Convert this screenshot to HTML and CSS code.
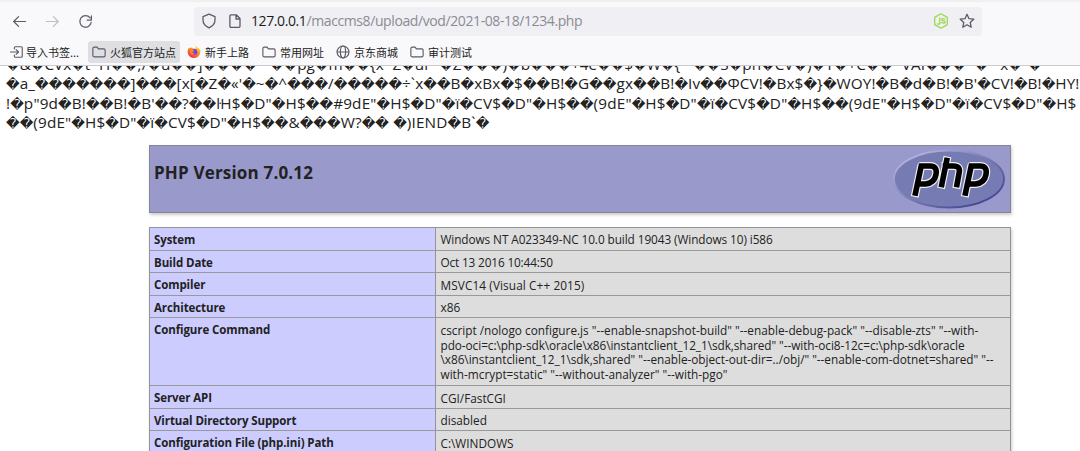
FILE: index.html
```html
<!DOCTYPE html>
<html lang="zh-CN">
<head>
<meta charset="utf-8">
<title>phpinfo()</title>
<link rel="stylesheet" href="styles.css">
</head>
<body>
<header class="chrome">
  <div class="nav">
    <svg class="nav-icon back" viewBox="0 0 16 16"><path d="M14.5 8H2M7 2.8 1.8 8 7 13.2"/></svg>
    <svg class="nav-icon forward" viewBox="0 0 16 16"><path d="M1.5 8H14M9 2.8 14.2 8 9 13.2"/></svg>
    <svg class="nav-icon reload" viewBox="0 0 16 16"><path d="M12.9 4.2A6.1 6.1 0 1 0 14.1 8.8M14.3 2v4.5H9.8"/></svg>
    <div class="urlbar">
      <svg class="url-icon shield" viewBox="0 0 16 16"><path d="M8 1.2 14 3.6V7c0 3.7-2.8 6.4-6 7.9C4.800 13.400 2 10.700 2 7V3.600z"/></svg>
      <svg class="url-icon page" viewBox="0 0 16 16"><path d="M4 1.800h5.300L13 5.500v7.700a1.100 1.100 0 0 1-1.100 1.100H4a1.100 1.100 0 0 1-1.100-1.100V2.900A1.100 1.100 0 0 1 4 1.800zM9 2v4h4"/></svg>
      <div class="url"><span class="host">127.0.0.1</span>/maccms8/upload/vod/2021-08-18/1234.php</div>
      <svg class="url-icon node" viewBox="0 0 16 16"><path d="M8 .8l6.300 3.600v7.200L8 15.200 1.700 11.600V4.400zM6.800 5v5.300q0 1.300-2.200.7M11.900 6q-3.200-1-3.200.7 0 .9 1.700 1.100 1.700.2 1.700 1.200 0 1.700-3.500.7"/></svg>
      <svg class="url-icon star" viewBox="0 0 16 16"><path d="M8 1.300l2 4.400 4.800.5-3.600 3.200 1 4.800L8 11.800l-4.200 2.400 1-4.800L1.200 6.200 6 5.700z"/></svg>
    </div>
  </div>
  <nav class="bookmarks">
    <a class="mark m-import"><svg viewBox="0 0 16 16"><path d="M5 4.500V3.200A1.200 1.200 0 0 1 6.200 2h6.600A1.200 1.200 0 0 1 14 3.200v9.600a1.200 1.200 0 0 1-1.200 1.200H6.200A1.200 1.200 0 0 1 5 12.800v-1.300M.500 8h9M7 5.200 9.800 8 7 10.800"/></svg><span>导入书签...</span></a>
    <a class="mark m-fox on"><svg viewBox="0 0 16 16"><path d="M1 4a1.500 1.500 0 0 1 1.500-1.500h3.300l1.500 2h6.200A1.500 1.500 0 0 1 15 6v6a1.500 1.500 0 0 1-1.500 1.500h-11A1.500 1.500 0 0 1 1 12z"/></svg><span>火狐官方站点</span></a>
    <a class="mark m-start"><svg class="firefox" viewBox="0 0 16 16"><defs><linearGradient id="flame" x1=".9" y1="0" x2=".2" y2="1"><stop offset="0" stop-color="#fff44f"/><stop offset=".4" stop-color="#ff9a1f"/><stop offset="1" stop-color="#f5204e"/></linearGradient></defs><path fill="url(#flame)" d="M10 .500c-1 1.800.200 2.700.700 3.400L7 4 4 2.500 3.300 4 2 3C1 5 .600 6.500.800 8.800a7.300 7.300 0 0 0 14.500-1C15.300 4.500 13.500 4 12.600 3.500 11.500 2.500 10.500 2 10 .500z"/><circle fill="#7542e5" cx="8.300" cy="8" r="3.500"/><path fill="#ff8a24" d="M3 6q2.500-1.800 5.200.3Q7.800 7.700 6 7.900q.8 2.400 3.200 1.700-1.500 2.300-4.200 1Q3 9 3 6z"/></svg><span>新手上路</span></a>
    <a class="mark m-common"><svg viewBox="0 0 16 16"><path d="M1 4a1.500 1.500 0 0 1 1.500-1.500h3.300l1.500 2h6.200A1.500 1.500 0 0 1 15 6v6a1.500 1.500 0 0 1-1.500 1.500h-11A1.500 1.500 0 0 1 1 12z"/></svg><span>常用网址</span></a>
    <a class="mark m-jd"><svg viewBox="0 0 16 16"><circle cx="8" cy="8" r="6.800"/><ellipse cx="8" cy="8" rx="3" ry="6.800"/><path d="M1.500 8h13"/></svg><span>京东商城</span></a>
    <a class="mark m-audit"><svg viewBox="0 0 16 16"><path d="M1 4a1.500 1.500 0 0 1 1.500-1.500h3.300l1.500 2h6.200A1.500 1.500 0 0 1 15 6v6a1.500 1.500 0 0 1-1.500 1.500h-11A1.500 1.500 0 0 1 1 12z"/></svg><span>审计测试</span></a>
  </nav>
</header>
<main>
  <div class="bytes">
    <p class="l1">�&amp;�CVx�t^H��;/�u��]���� ^��pg�m��{x^Z�ur^�Z���)�b���+4e��$�W�{^ ��S�ph�CV�)�Y�+C��^VAI���^�&nbsp;&nbsp; x�"�</p>
    <p class="l2">�a_�������]���[x[�Z�«'�~�^���/�����÷`x��B�xBx�$��B!�G��gx��B!�Iv��ΦCV!�Bx$�}�WOY!�B�d�B!�B'�CV!�B!�HY!</p>
    <p class="l3">!�p"9d�B!��B!�B'��?��ŀH$�D"�H$��#9dE"�H$�D"�ï�CV$�D"�H$��(9dE"�H$�D"�ï�CV$�D"�H$��(9dE"�H$�D"�ï�CV$�D"�H$</p>
    <p class="l4">��(9dE"�H$�D"�ï�CV$�D"�H$��&amp;���W?�� �)IEND�B`�</p>
  </div>
  <section class="banner">
    <h1>PHP Version 7.0.12</h1>
    <svg class="logo" viewBox="0 0 114 62">
      <defs>
        <linearGradient id="rim" x1="0" y1="0" x2="1" y2="1"><stop offset=".1" stop-color="#b5b7dd"/><stop offset=".5" stop-color="#777bb3"/><stop offset=".85" stop-color="#484893"/></linearGradient>
        <path id="mark" d="M23.500 45 29.200 18H38q7.500 0 6 8.500T33.500 36H26M54.700 12.500 49.800 36.500M53.500 18h8q7 0 5.700 6.500L65 36.500M73.500 45 79.200 18H88q7.500 0 6 8.500T83.500 36H76"/>
      </defs>
      <ellipse cx="57" cy="31" rx="55" ry="28.500" fill="#777bb3" stroke="url(#rim)" stroke-width="1.800"/>
      <use class="php-back" href="#mark"/>
      <use class="php-front" href="#mark"/>
    </svg>
  </section>
  <dl class="info">
    <dt>System</dt><dd class="system">Windows NT A023349-NC 10.0 build 19043 (Windows 10) i586</dd>
    <dt>Build Date</dt><dd class="date">Oct 13 2016 10:44:50</dd>
    <dt>Compiler</dt><dd class="compiler">MSVC14 (Visual C++ 2015)</dd>
    <dt>Architecture</dt><dd>x86</dd>
    <dt>Configure Command</dt><dd>cscript /nologo configure.js "--enable-snapshot-build" "--enable-debug-pack" "--disable-zts" "--with-<br><span class="tight">pdo-oci=c:\php-sdk\oracle\x86\instantclient_12_1\sdk,shared" "--with-oci8-12c=c:\php-sdk\oracle</span><br><span class="snug">\x86\instantclient_12_1\sdk,shared" "--enable-object-out-dir=../obj/" "--enable-com-dotnet=shared" "--</span><br>with-mcrypt=static" "--without-analyzer" "--with-pgo"</dd>
    <dt>Server API</dt><dd>CGI/FastCGI</dd>
    <dt>Virtual Directory Support</dt><dd>disabled</dd>
    <dt>Configuration File (php.ini) Path</dt><dd>C:\WINDOWS</dd>
  </dl>
</main>
<script src="bytes.js"></script>
</body>
</html>
```
FILE: bytes.js
```js
// Give every replacement character its own fixed-width cell.
document.querySelectorAll('.bytes p').forEach(function (line) {
  line.innerHTML = line.innerHTML.replace(/\uFFFD/g, '<i>\uFFFD</i>');
});
```
FILE: styles.css
```css
* { box-sizing: border-box; }
html, body { height: 100%; overflow: hidden; }
body { margin: 0; background: #fff; color: #222; font-family: "Open Sans", "Noto Sans CJK SC", sans-serif; }
svg { fill: none; stroke: #5b5b66; stroke-width: 1.3; stroke-linecap: round; stroke-linejoin: round; flex: none; }

.chrome { height: 66px; background: #f9f9fb; border-top: 2px solid #f0f0f1; border-bottom: 1px solid #cbcbcf; }
.nav { display: flex; align-items: center; height: 37px; padding: 1px 0 0 12px; }
.nav-icon { width: 15px; height: 15px; }
.forward { margin-left: 18px; stroke: #bebec4; }
.reload { margin-left: 18px; }
.urlbar { display: flex; align-items: center; width: 788px; height: 29px; margin-left: 101px; padding: 0 7px; background: #f0f0f4; border-radius: 4px; }
.url-icon { width: 16px; height: 16px; }
.page { margin-left: 10px; }
.url { flex: 1; margin-left: 8px; font-size: 14px; line-height: 20px; letter-spacing: -.4px; color: #8b8b93; white-space: nowrap; }
.host { color: #1c1b22; }
.node { stroke: #99d94e; margin-right: 10px; }

.bookmarks { display: flex; height: 22px; padding-left: 6px; margin-top: 2px; }
.mark { display: flex; align-items: center; padding: 0 4px; gap: 4px; border-radius: 3px; font: 11px/22px "Noto Sans CJK SC", sans-serif; color: #222; white-space: nowrap; }
.mark svg { width: 14px; height: 14px; }
.mark span { flex: 1; }
.on { background: #dedee3; }
.firefox { stroke: none; }
.m-import { width: 82px; gap: 2px; }
.m-fox { width: 92px; }
.m-start { width: 75px; margin-left: 3px; }
.m-common { width: 74px; }
.m-jd { width: 74px; }

.bytes { height: 79px; overflow: hidden; padding-left: 6px; }
.bytes p { margin: 0; height: 19.500px; font-size: 15.300px; line-height: 20px; white-space: nowrap; }
.bytes .l1 { height: 19px; margin-top: -12px; }
.bytes .l2 { letter-spacing: .1px; }
.bytes .l3, .bytes .l4 { letter-spacing: .17px; }
.bytes i { display: inline-block; width: 13.650px; font: 13.300px/1 "DejaVu Sans", sans-serif; letter-spacing: 0; text-align: center; }

.banner { display: flex; justify-content: space-between; width: 862px; height: 68px; margin-left: 149px; padding: 2px 4px 0; background: #9999cc; border: 1px solid #858596; box-shadow: 1px 2px 3px #ccc; }
.banner h1 { margin: 13px 0 0; font-size: 17px; line-height: 24px; font-weight: 700; letter-spacing: .18px; }
.logo { width: 114px; height: 62px; }
.php-back { stroke: #eee; stroke-width: 8; stroke-linecap: square; stroke-linejoin: round; }
.php-front { stroke: #000; stroke-width: 5.600; stroke-linecap: square; stroke-linejoin: miter; }

.info { display: grid; grid-template-columns: 286px 1fr; grid-template-rows: repeat(4, 22.600px) 67.900px repeat(3, 22.600px); width: 862px; margin: 14px 0 0 149px; border: 1px solid #929299; box-shadow: 1px 2px 3px #ccc; font-size: 11.800px; line-height: 14.800px; }
.info dt, .info dd { margin: 0; padding: 5px 4px 0; border-bottom: 1px solid #999; white-space: nowrap; }
.info dt { background: #ccccff; border-right: 1px solid #929299; font-size: 11.500px; font-weight: 700; letter-spacing: -.1px; }
.info dd { background: #dddddd; padding: 4.400px 4px 0 4.500px; }
.info .system { letter-spacing: -.08px; }
.info .date { letter-spacing: -.15px; }
.info .compiler { letter-spacing: .1px; }
.tight { letter-spacing: -.06px; }
.snug { letter-spacing: -.03px; }
```
